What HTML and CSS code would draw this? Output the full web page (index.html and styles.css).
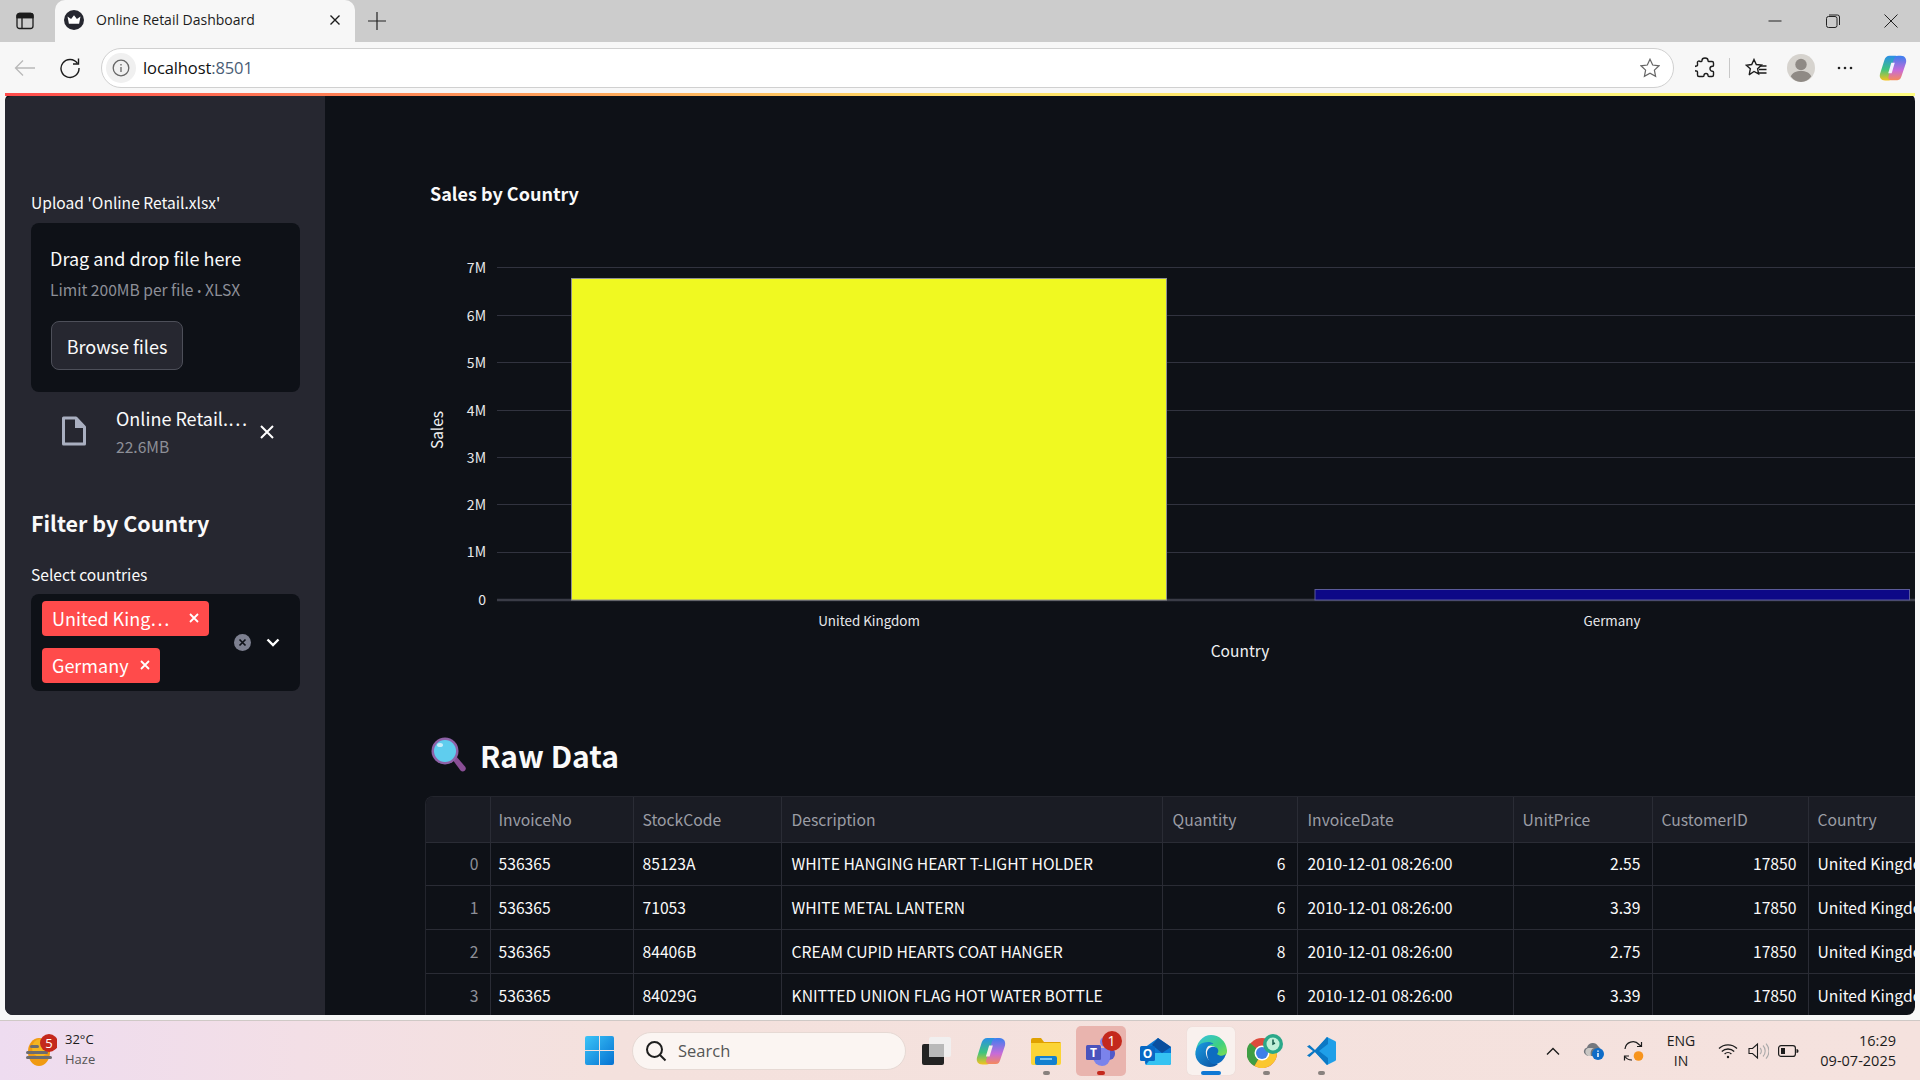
FILE: index.html
```html
<!DOCTYPE html>
<html lang="en">
<head>
<meta charset="utf-8">
<title>Online Retail Dashboard</title>
<link rel="stylesheet" href="styles.css">
</head>
<body>
<div class="screen">
  <header class="tabstrip">
    <div class="tab-side">
      <svg width="18" height="18" viewBox="0 0 18 18" fill="none" stroke="#1c1c1c" stroke-width="1.3"><rect x="1" y="1.5" width="16" height="15" rx="2.5"/><path d="M1 5.5h16M6 5.5v11"/><path d="M1 5.5V4a2.5 2.5 0 0 1 2.5-2.5h11A2.5 2.5 0 0 1 17 4v1.5z" fill="#1c1c1c"/></svg>
    </div>
    <div class="tab">
      <svg width="20" height="20" viewBox="0 0 20 20"><circle cx="10" cy="10" r="10" fill="#262730"/><path d="M3.5 6.5l3.6 2.6L10 5.2l2.9 3.9 3.6-2.6-1.4 7.2H4.9z" fill="#fff"/></svg>
      <span class="tab-title">Online Retail Dashboard</span>
      <svg class="tab-close" width="12" height="12" viewBox="0 0 12 12" stroke="#1c1c1c" stroke-width="1.4"><path d="M1.5 1.5l9 9M10.5 1.5l-9 9"/></svg>
    </div>
    <svg class="new-tab" width="18" height="18" viewBox="0 0 18 18" stroke="#222" stroke-width="1.2"><path d="M9 0v18M0 9h18"/></svg>
    <div class="win-controls">
      <svg width="14" height="14" viewBox="0 0 14 14" stroke="#222" stroke-width="1"><path d="M0.5 7h13"/></svg>
      <svg width="14" height="14" viewBox="0 0 14 14" fill="none" stroke="#222" stroke-width="1"><rect x="0.5" y="2.5" width="10.5" height="11" rx="2"/><path d="M3 1h8.500a2 2 0 0 1 2 2v8"/></svg>
      <svg width="14" height="14" viewBox="0 0 14 14" stroke="#222" stroke-width="1"><path d="M0.500 0.500l13 13M13.500 0.500l-13 13"/></svg>
    </div>
  </header>

  <nav class="toolbar">
    <svg class="tb-back" width="22" height="18" viewBox="0 0 22 18" fill="none" stroke="#b9b9b9" stroke-width="1.300"><path d="M21 9H1.500M9 1.500L1.500 9 9 16.500"/></svg>
    <svg class="tb-reload" width="22" height="22" viewBox="0 0 22 22" fill="none" stroke="#1c1c1c" stroke-width="1.400"><path d="M18.500 6.500A9 9 0 1 0 20 11"/><path d="M19.500 1.500v5.500H14"/></svg>
    <div class="address">
      <span class="info"><svg width="18" height="18" viewBox="0 0 18 18" fill="none" stroke="#666" stroke-width="1.300"><circle cx="9" cy="9" r="7.800"/><path d="M9 8v5M9 5v1.500"/></svg></span>
      <span class="url">localhost<span class="port">:8501</span></span>
      <svg class="addr-star" width="20" height="20" viewBox="0 0 20 20" fill="none" stroke="#666" stroke-width="1.200"><path d="M10 1.200l2.700 5.800 6.300.8-4.600 4.300 1.200 6.200L10 15.200l-5.600 3.100 1.200-6.200L1 7.800 7.300 7z"/></svg>
    </div>
    <div class="tb-icons">
      <svg width="20" height="22" viewBox="0 0 20 22" fill="none" stroke="#1c1c1c" stroke-width="1.400"><path d="M7 3.500a3 2.500 0 0 1 6 0c0 .6 0 1 .500 1h3.500a1.500 1.500 0 0 1 1.500 1.500v2.500c0 .5-.5.800-1 .800a2.500 2.500 0 0 0 0 5c.5 0 1 .3 1 .8V18a1.500 1.500 0 0 1-1.500 1.500h-3c-.6 0-1-.4-1-1a2 2 0 0 0-4 0c0 .6-.4 1-1 1H4a1.500 1.500 0 0 1-1.500-1.500v-3c0-.5-.4-1-1-1a2.500 2.500 0 0 1 0-5c.6 0 1-.4 1-1V6A1.500 1.500 0 0 1 5 4.500h1.500c.4 0 .5-.4.500-1z"/></svg>
      <span class="tb-divider"></span>
      <svg class="tb-favs" width="22" height="20" viewBox="0 0 22 20" fill="none" stroke="#1c1c1c" stroke-width="1.400"><path d="M9 1.500l2.300 5 5.200.6-3.900 3.600 1 5.200L9 13.500l-4.600 3-.1-.1 1-5.600L1.300 7.200l5.400-.7z"/><path d="M15 8h6.500M14 11.500h7.500M13.500 15h8"/></svg>
      <svg class="tb-avatar" width="28" height="28" viewBox="0 0 28 28"><circle cx="14" cy="14" r="14" fill="#d6d3ce"/><circle cx="14" cy="10.500" r="5.700" fill="#8f8a85"/><path d="M3.800 22.500c1.500-4 5.500-5.500 10.200-5.500s8.700 1.500 10.200 5.500A14 14 0 0 1 14 28 14 14 0 0 1 3.800 22.500z" fill="#8f8a85"/></svg>
      <svg class="tb-dots" width="16" height="4" viewBox="0 0 16 4" fill="#222"><circle cx="2" cy="2" r="1.300"/><circle cx="8" cy="2" r="1.300"/><circle cx="14" cy="2" r="1.300"/></svg>
      <svg class="tb-copilot" width="28" height="26" viewBox="0 0 32 30"><defs><linearGradient id="cpA" x1="0" y1="0" x2="0" y2="1"><stop offset="0" stop-color="#2a8fe8"/><stop offset=".55" stop-color="#3fc47e"/><stop offset="1" stop-color="#f6c21c"/></linearGradient><linearGradient id="cpB" x1="0" y1="0" x2="0" y2="1"><stop offset="0" stop-color="#3a7ff0"/><stop offset=".6" stop-color="#c86bd8"/><stop offset="1" stop-color="#f58a5c"/></linearGradient></defs><path d="M12 1h7c2 0 3 1 3.500 3L16 26c-.5 2-2 3.500-5 3.500H7C2 29.500 0 26 1 22L6 6c1-3 3-5 6-5z" fill="url(#cpA)"/><path d="M21 29h-7c-2 0-3-1-3.500-3L17 5c.6-2 2-4 5-4h3c5 0 7 4 6 8l-5 15c-1 3-2 5-5 5z" fill="url(#cpB)"/><path d="M14 9h4l-3.500 12h-4z" fill="#f4f0ff"/></svg>
    </div>
  </nav>

  <div class="app">
    <aside class="sidebar">
      <div class="field-label">Upload 'Online Retail.xlsx'</div>
      <section class="dropzone">
        <div class="drop-title">Drag and drop file here</div>
        <div class="drop-limit">Limit 200MB per file <span class="bullet">•</span> XLSX</div>
        <button class="browse">Browse files</button>
      </section>
      <div class="file-row">
        <svg class="file-icon" width="26" height="30" viewBox="0 0 26 30" fill="none" stroke="#a9afc0" stroke-width="3" stroke-linejoin="round"><path d="M2.500 2h12.500l8.500 9v17h-21z"/><path d="M14 2l9.500 10H14z" fill="#a9afc0" stroke="none"/></svg>
        <div class="file-meta">
          <div class="file-name">Online Retail.…</div>
          <div class="file-size">22.6MB</div>
        </div>
        <svg class="file-x" width="14" height="14" viewBox="0 0 14 14" stroke="#fff" stroke-width="2"><path d="M1 1l12 12M13 1L1 13"/></svg>
      </div>
      <h3 class="filter-head">Filter by Country</h3>
      <div class="field-label">Select countries</div>
      <div class="multiselect">
        <div class="tags">
          <span class="tag tag-long"><span class="tag-text">United King…</span><svg width="10" height="10" viewBox="0 0 10 10" stroke="#fff" stroke-width="1.800"><path d="M1 1l8 8M9 1L1 9"/></svg></span>
          <span class="tag"><span class="tag-text">Germany</span><svg width="10" height="10" viewBox="0 0 10 10" stroke="#fff" stroke-width="1.800"><path d="M1 1l8 8M9 1L1 9"/></svg></span>
        </div>
        <svg class="ms-clear" width="17" height="17" viewBox="0 0 17 17"><circle cx="8.500" cy="8.500" r="8.500" fill="#7d8090"/><path d="M5.500 5.500l6 6M11.500 5.500l-6 6" stroke="#0e1117" stroke-width="1.700"/></svg>
        <svg class="ms-chevron" width="14" height="9" viewBox="0 0 14 9" fill="none" stroke="#fff" stroke-width="2.400"><path d="M1.500 1.500L7 7l5.500-5.500"/></svg>
      </div>
    </aside>

    <main class="main">
      <div class="chart-title">Sales by Country</div>
      <svg class="chart" width="1495" height="470" viewBox="425 210 1495 470">
        <g class="grid">
          <path d="M497 267.500H1915M497 315.500H1915M497 362.500H1915M497 410.500H1915M497 457.500H1915M497 504.500H1915M497 552.500H1915"/>
        </g>
        <path class="axis-zero" d="M497 600H1915"/>
        <rect class="bar-uk" x="571.500" y="278.500" width="595" height="321.500"/>
        <rect class="bar-de" x="1315" y="589.500" width="594.500" height="10.500"/>
        <g class="tick" text-anchor="end">
          <text x="486" y="273">7M</text><text x="486" y="321">6M</text><text x="486" y="368">5M</text><text x="486" y="416">4M</text><text x="486" y="463">3M</text><text x="486" y="510">2M</text><text x="486" y="557">1M</text><text x="486" y="605">0</text>
        </g>
        <g class="tick tick-x" text-anchor="middle">
          <text x="869" y="626">United Kingdom</text><text x="1612" y="626">Germany</text>
        </g>
        <text class="axis-title" x="1240" y="657" text-anchor="middle">Country</text>
        <text class="axis-title" text-anchor="middle" transform="translate(443 430) rotate(-90)">Sales</text>
      </svg>
      <h2 class="raw-head">
        <svg width="36" height="36" viewBox="0 0 36 36"><path d="M21 22l4-3 9 10.500c1.200 1.500 1 3-.3 4.200s-3 1-4.200-.3z" fill="#8a4f96"/><circle cx="14" cy="14" r="13.500" fill="#8e62a8"/><circle cx="14" cy="14" r="11" fill="#5fcdee"/><ellipse cx="9" cy="8" rx="3" ry="2" fill="#c8eefa"/></svg>
        <span>Raw Data</span>
      </h2>
      <div class="table-wrap">
        <table class="data">
          <colgroup><col class="c-idx"><col class="c-inv"><col class="c-stock"><col class="c-desc"><col class="c-qty"><col class="c-date"><col class="c-price"><col class="c-cust"><col class="c-country"></colgroup>
          <thead><tr><th></th><th>InvoiceNo</th><th>StockCode</th><th>Description</th><th>Quantity</th><th>InvoiceDate</th><th>UnitPrice</th><th>CustomerID</th><th>Country</th></tr></thead>
          <tbody>
            <tr><td class="idx">0</td><td>536365</td><td>85123A</td><td>WHITE HANGING HEART T-LIGHT HOLDER</td><td class="num">6</td><td>2010-12-01 08:26:00</td><td class="num">2.55</td><td class="num">17850</td><td>United Kingdom</td></tr>
            <tr><td class="idx">1</td><td>536365</td><td>71053</td><td>WHITE METAL LANTERN</td><td class="num">6</td><td>2010-12-01 08:26:00</td><td class="num">3.39</td><td class="num">17850</td><td>United Kingdom</td></tr>
            <tr><td class="idx">2</td><td>536365</td><td>84406B</td><td>CREAM CUPID HEARTS COAT HANGER</td><td class="num">8</td><td>2010-12-01 08:26:00</td><td class="num">2.75</td><td class="num">17850</td><td>United Kingdom</td></tr>
            <tr><td class="idx">3</td><td>536365</td><td>84029G</td><td>KNITTED UNION FLAG HOT WATER BOTTLE</td><td class="num">6</td><td>2010-12-01 08:26:00</td><td class="num">3.39</td><td class="num">17850</td><td>United Kingdom</td></tr>
          </tbody>
        </table>
      </div>
    </main>
  </div>

  <footer class="taskbar">
    <div class="weather">
      <svg class="weather-icon" width="32" height="34" viewBox="0 0 32 34"><ellipse cx="14" cy="18" rx="11" ry="14" fill="#f09a12"/><ellipse cx="15" cy="14" rx="8" ry="9" fill="#f4b522"/><g fill="#6c6c70"><rect x="5" y="11" width="9" height="3" rx="1.500"/><rect x="1" y="17" width="22" height="3" rx="1.500"/><rect x="1" y="22" width="26" height="3" rx="1.500"/></g><circle cx="24" cy="9" r="9" fill="#c4281c"/><text class="badge-num" x="24" y="13.500" text-anchor="middle">5</text></svg>
      <div class="weather-text"><div class="w-temp">32°C</div><div class="w-cond">Haze</div></div>
    </div>
    <div class="tb-center">
      <svg class="win-logo" width="29" height="29" viewBox="0 0 29 29"><defs><linearGradient id="wl" x1="0" y1="0" x2="1" y2="1"><stop offset="0" stop-color="#3cc4f7"/><stop offset="1" stop-color="#0572d2"/></linearGradient></defs><path d="M0 2a2 2 0 0 1 2-2h12v14H0zM15 0h12a2 2 0 0 1 2 2v12H15zM0 15h14v14H2a2 2 0 0 1-2-2zM15 15h14v12a2 2 0 0 1-2 2H15z" fill="url(#wl)"/></svg>
      <div class="search">
        <svg width="22" height="22" viewBox="0 0 22 22" fill="none" stroke="#1e1e1e" stroke-width="2"><circle cx="9.500" cy="9.500" r="7.500"/><path d="M15 15l5.500 5.500"/></svg>
        <span>Search</span>
      </div>
      <div class="app-slot">
        <svg width="30" height="30" viewBox="0 0 30 30"><rect x="1" y="8" width="22" height="21" rx="2" fill="#232323"/><rect x="8" y="1" width="22" height="20" rx="2" fill="#f1f1f1" fill-opacity=".9"/><rect x="8" y="8" width="15" height="13" fill="#b9b9b9"/></svg>
      </div>
      <div class="app-slot">
        <svg width="30" height="28" viewBox="0 0 32 30"><defs><linearGradient id="cpC" x1="0" y1="0" x2="0" y2="1"><stop offset="0" stop-color="#2a8fe8"/><stop offset=".55" stop-color="#3fc47e"/><stop offset="1" stop-color="#f6c21c"/></linearGradient><linearGradient id="cpD" x1="0" y1="0" x2="0" y2="1"><stop offset="0" stop-color="#3a7ff0"/><stop offset=".6" stop-color="#c86bd8"/><stop offset="1" stop-color="#f58a5c"/></linearGradient></defs><path d="M12 1h7c2 0 3 1 3.500 3L16 26c-.5 2-2 3.500-5 3.500H7C2 29.500 0 26 1 22L6 6c1-3 3-5 6-5z" fill="url(#cpC)"/><path d="M21 29h-7c-2 0-3-1-3.500-3L17 5c.6-2 2-4 5-4h3c5 0 7 4 6 8l-5 15c-1 3-2 5-5 5z" fill="url(#cpD)"/><path d="M14 9h4l-3.500 12h-4z" fill="#f7ece8"/></svg>
      </div>
      <div class="app-slot running">
        <svg width="32" height="28" viewBox="0 0 32 28"><path d="M1 3a2 2 0 0 1 2-2h8l3 4h16a2 2 0 0 1 1 2v3H1z" fill="#e0a100"/><path d="M1 6h30v20a2 2 0 0 1-2 2H3a2 2 0 0 1-2-2z" fill="#fbd435"/><rect x="5" y="19" width="22" height="9" rx="2" fill="#1480cf"/><rect x="10" y="21" width="12" height="2" fill="#7cc7f2"/></svg>
      </div>
      <div class="app-slot active-teams">
        <svg width="32" height="30" viewBox="0 0 32 30"><circle cx="20" cy="6" r="5" fill="#7b83eb"/><circle cx="28" cy="9" r="3.500" fill="#5059c9"/><rect x="16" y="11" width="14" height="13" rx="6" fill="#5059c9"/><path d="M8 12h17v10a8 8 0 0 1-8 8 9 9 0 0 1-9-9z" fill="#7b83eb"/><rect x="1" y="9" width="15" height="15" rx="1.500" fill="#4b53bc"/><text class="teams-t" x="8.500" y="21" text-anchor="middle">T</text></svg>
        <b class="count-badge">1</b>
        <i class="dash-red"></i>
      </div>
      <div class="app-slot">
        <svg width="32" height="28" viewBox="0 0 32 28"><path d="M4 11L18 1l13 9v16a2 2 0 0 1-2 2H7a2 2 0 0 1-2-2z" fill="#0a78d4"/><path d="M18 1l13 9-9 6-10-8z" fill="#0b4f9e"/><path d="M6 28l9-12h16v10a2 2 0 0 1-2 2z" fill="#35c3f2"/><path d="M6 14l6 6-6 6z" fill="#0f5ea8"/><rect x="0" y="9" width="15" height="15" rx="1.500" fill="#0868c4"/><text class="teams-t" x="7.500" y="21" text-anchor="middle">O</text></svg>
      </div>
      <div class="app-slot active-edge">
        <svg width="32" height="32" viewBox="0 0 32 32"><defs><linearGradient id="eg" x1="0" y1="0" x2="1" y2="1"><stop offset="0" stop-color="#35c1e8"/><stop offset=".6" stop-color="#3fd07f"/><stop offset="1" stop-color="#86e04c"/></linearGradient><linearGradient id="eb" x1="0" y1="0" x2="1" y2="1"><stop offset="0" stop-color="#1b9de2"/><stop offset="1" stop-color="#0b4f9e"/></linearGradient></defs><path d="M16 0C24 0 31 6 32 15c.5 4-2 7-6 7-3 0-6-1-5-3 1-1 2-3 0-6-2-3-8-3-12 0-3 2-6 5-8.500 7C.5 7 8 0 16 0z" fill="url(#eg)"/><path d="M.5 20C0 10 7 7 13 7c4 0 6 2 5 2-4 0-8 4-7 10s6 10 12 10c-2 2-5 3-8 3C8 32 1 27 .5 20z" fill="url(#eb)"/><path d="M12 18c0-4 4-7 8-6s4 5 2 7c3 3 8 2 9-1-1 7-7 12-13 11-4-1-6-7-6-11z" fill="#0d6cc0"/></svg>
        <i class="dash-blue"></i>
      </div>
      <div class="app-slot running">
        <svg class="chrome" width="38" height="34" viewBox="0 0 38 34"><circle cx="15" cy="19" r="15" fill="#dd4b3d"/><path d="M15 19l-7.500 13A15 15 0 0 1 3 9z" fill="#3f9e44"/><path d="M15 19h15a15 15 0 0 1-22.500 13z" fill="#fbc730"/><circle cx="15" cy="19" r="7.500" fill="#fff"/><circle cx="15" cy="19" r="6" fill="#3f7fe8"/><circle cx="26" cy="10" r="10" fill="#2aa889"/><circle cx="26" cy="10" r="6.500" fill="#bff0d8"/><path d="M26 5.500V10l2-1" fill="none" stroke="#145a4a" stroke-width="1.500"/></svg>
      </div>
      <div class="app-slot running">
        <svg width="30" height="30" viewBox="0 0 30 30"><path d="M21 1l8 4a1.500 1.500 0 0 1 1 1.500v17a1.500 1.500 0 0 1-1 1.500l-8 4L9 16z" fill="#1f9fe8"/><path d="M21 1l1 1v6l-9 7 9 7v6l-1 1L9 16 3.500 21 1 19.500 7 15 1 10.500 3.500 9 9 14z" fill="#0b78c4"/></svg>
      </div>
    </div>
    <div class="tray">
      <svg class="tray-up" width="14" height="8" viewBox="0 0 14 8" fill="none" stroke="#1c1c1c" stroke-width="1.400"><path d="M1 7.500L7 1.500l6 6"/></svg>
      <svg class="tray-cloud" width="22" height="20" viewBox="0 0 22 20"><path d="M3 14a4 4 0 0 1 1-7.500A6 6 0 0 1 15 5a4 4 0 0 1 2 4l-5 6H5z" fill="#75787e"/><path d="M3 13a4 4 0 0 1 2-6h6c-3 1-4 4-3 8H5z" fill="#c9c7c4"/><circle cx="15" cy="13" r="6" fill="#0f6cc7"/><path d="M15 12v4M15 9.500v1.200" stroke="#fff" stroke-width="1.500"/></svg>
      <svg class="tray-sync" width="22" height="22" viewBox="0 0 22 22" fill="none" stroke="#1c1c1c" stroke-width="1.200"><path d="M2 9a8 8 0 0 1 14-4.500l2.500 2M18.500 2v4.500H14"/><path d="M1.500 20.500V16H6"/><path d="M2 16.500a8 8 0 0 0 7 3.500"/><circle cx="15.500" cy="16" r="4.800" fill="#f7941d" stroke="none"/></svg>
      <div class="lang"><div>ENG</div><div>IN</div></div>
      <svg class="tray-wifi" width="20" height="16" viewBox="0 0 20 16" fill="none" stroke="#1c1c1c" stroke-width="1.300"><path d="M1 5.500a13 13 0 0 1 18 0M3.800 8.500a9 9 0 0 1 12.400 0M6.600 11a5 5 0 0 1 6.800 0"/><circle cx="10" cy="14" r="1.200" fill="#1c1c1c" stroke="none"/></svg>
      <svg class="tray-vol" width="21" height="18" viewBox="0 0 21 18" fill="none" stroke="#1c1c1c" stroke-width="1.100"><path d="M1 6.500h3.500L9.500 2v14l-5-4.500H1z"/><path d="M12 6a4 4 0 0 1 0 6M15 3.500a8 8 0 0 1 0 11M18 1.500a11 11 0 0 1 0 15" stroke="#aaa"/></svg>
      <svg class="tray-bat" width="21" height="12" viewBox="0 0 21 12" fill="none" stroke="#1c1c1c" stroke-width="1.200"><rect x="0.600" y="0.600" width="16.800" height="10.800" rx="2.500"/><rect x="3" y="3" width="4" height="6" fill="#1c1c1c" stroke="none"/><path d="M18.500 4v4c1.500 0 2-1 2-2s-.5-2-2-2z" fill="#1c1c1c" stroke="none"/></svg>
      <div class="clock"><div>16:29</div><div>09-07-2025</div></div>
    </div>
  </footer>
</div>
</body>
</html>
```

FILE: styles.css
```css
* { box-sizing: border-box; }
html, body { margin: 0; padding: 0; height: 100%; overflow: hidden; }
body { font-family: "Noto Sans CJK SC", "Noto Sans", sans-serif; background: #f7f7f7; color: #fafafa; }
svg { display: block; flex: none; }
.screen { display: flex; flex-direction: column; width: 1920px; height: 1080px; overflow: hidden; }

/* Browser tab strip */
.tabstrip { height: 42px; flex: none; background: #cccccc; display: flex; align-items: center; }
.tab-side { width: 55px; display: flex; justify-content: center; padding-right: 6px; }
.tab { width: 300px; height: 42px; background: #f7f7f7; border-radius: 10px 10px 0 0; display: flex; align-items: center; padding: 0 14px 2px 9px; gap: 12px; font-family: "Open Sans", sans-serif; }
.tab-title { flex: 1; font-size: 14px; color: #1c1c1c; margin-bottom: 2px; }
.new-tab { margin-left: 13px; }
.win-controls { margin-left: auto; display: flex; gap: 44px; padding-right: 22px; align-items: center; }

/* Browser toolbar */
.toolbar { height: 51px; flex: none; background: #f7f7f7; display: flex; align-items: center; padding: 0 13px 0 14px; }
.tb-back { margin-right: 23px; }
.tb-reload { margin-right: 20px; }
.address { width: 1573px; height: 40px; background: #fff; border: 1px solid #d0d0d0; border-radius: 20px; display: flex; align-items: center; padding: 0 13px 0 4px; font-family: "Open Sans", sans-serif; }
.info { width: 30px; height: 30px; border-radius: 50%; background: #f0f0f0; display: flex; align-items: center; justify-content: center; }
.url { margin-left: 7px; font-size: 16.500px; color: #111; flex: 1; letter-spacing: -0.1px; }
.port { color: #4a5d75; }
.tb-icons { display: flex; align-items: center; margin-left: 21px; }
.tb-divider { width: 1px; height: 20px; background: #c8c8c8; margin: 0 15px 0 14px; }
.tb-favs { margin-right: 20px; }
.tb-avatar { margin-right: 22px; }
.tb-dots { margin-right: 26px; }

/* Streamlit app */
.app { flex: none; height: 922px; margin: 0 5px; display: flex; border-top: 3px solid transparent; border-image: linear-gradient(90deg, #ff4b4b, #ffe066, #fffd80) 1; background: #0e1117; overflow: hidden; border-radius: 8px; position: relative; }
.sidebar { width: 320px; flex: none; background: #262730; padding: 95px 25px 0 26px; }
.field-label { font-size: 15.600px; line-height: 22px; color: #fafafa; height: 22px; }
.dropzone { margin-top: 10px; height: 169px; background: #0e1117; border-radius: 8px; padding: 22px 20px 0 19px; }
.drop-title { font-size: 18px; line-height: 26px; color: #fafafa; }
.drop-limit { font-size: 15.600px; line-height: 22px; margin-top: 7px; color: #8d8f97; white-space: nowrap; }
.bullet { font-family: "Open Sans", sans-serif; font-size: 12px; }
.browse { display: block; margin: 18px 0 0 1px; width: 132px; height: 49px; background: #262730; border: 1px solid #4d4f59; border-radius: 8px; color: #fafafa; font: 18px "Noto Sans CJK SC", sans-serif; padding: 0; }
.file-row { display: flex; align-items: flex-start; margin-top: 13px; padding-left: 30px; height: 60px; position: relative; }
.file-icon { margin-top: 11px; }
.file-meta { margin-left: 29px; width: 134px; }
.file-name { font-size: 18px; line-height: 26px; white-space: nowrap; }
.file-size { font-size: 15.600px; line-height: 22px; margin-top: 4px; color: #8d8f97; }
.file-x { margin-left: 10px; margin-top: 20px; }
.filter-head { margin: 41px 0 0; font-size: 21.500px; font-weight: 600; line-height: 34px; color: #fafafa; }
.filter-head + .field-label { margin-top: 23px; }
.multiselect { margin-top: 9px; height: 97px; background: #0e1117; border-radius: 8px; display: flex; align-items: center; padding: 0 20px 0 11px; }
.tags { width: 195px; display: flex; flex-direction: column; gap: 12px; align-items: flex-start; padding-bottom: 2px; }
.tag { height: 35px; background: #ff4b4b; border-radius: 4px; display: flex; align-items: center; padding: 0 10px; gap: 11px; font-size: 18px; color: #fff; }
.tag-text { white-space: nowrap; }
.tag-long { width: 167px; justify-content: space-between; }
.ms-clear { margin-left: 11px; }
.ms-chevron { margin-left: 15px; }

/* Main column */
.main { flex: 1; min-width: 0; overflow: hidden; padding: 83px 0 0 100px; }
.chart-title { font-size: 18px; font-weight: 700; line-height: 28px; color: #fafafa; margin-left: 5px; }
.chart { margin-top: 3px; }
.grid path { stroke: #31333f; stroke-width: 1; fill: none; }
.axis-zero { stroke: #3a3c47; stroke-width: 2.500; fill: none; }
.bar-uk { fill: #f0f921; stroke: #8f9090; stroke-width: 1; }
.bar-de { fill: #0d0887; stroke: #5a5a9a; stroke-width: 1; }
.tick text { font-size: 14px; fill: #e8e9ec; }
.tick-x text { font-size: 13.400px; }
.axis-title { font-size: 15.500px; fill: #f0f1f3; }
.raw-head { display: flex; align-items: center; margin: 53px 0 0 6px; height: 44px; gap: 13px; font-size: 30px; font-weight: 600; color: #fafafa; }
.table-wrap { margin-top: 19px; width: 1500px; border: 1px solid #23252d; border-right: 0; border-bottom: 0; border-radius: 8px 0 0 0; overflow: hidden; }
.data { width: 1500px; table-layout: fixed; border-collapse: collapse; font-size: 15.700px; color: #fafafa; }
.c-idx { width: 64px; }
.c-inv { width: 143px; }
.c-stock { width: 148px; }
.c-desc { width: 381px; }
.c-qty { width: 135px; }
.c-date { width: 216px; }
.c-price { width: 139px; }
.c-cust { width: 156px; }
.c-country { width: 118px; }
.data th { height: 45px; background: #1a1c24; color: #9b9da5; font-weight: 400; text-align: left; padding: 0 9px; border: 1px solid #2a2c35; border-top: 0; border-left-width: 0; white-space: nowrap; overflow: hidden; }
.data td { height: 43.750px; padding: 0 9px; border: 1px solid #2a2c35; border-left-width: 0; white-space: nowrap; overflow: hidden; }
.data th:nth-child(2), .data td:nth-child(2) { padding-left: 8px; }
.data th:nth-child(4), .data td:nth-child(4), .data th:nth-child(5), .data th:nth-child(6), .data td:nth-child(6) { padding-left: 10px; }
.data td.idx { text-align: right; color: #8d8f97; padding-right: 11px; }
.data td.num { text-align: right; padding-right: 11px; }

/* Windows taskbar */
.taskbar { margin-top: auto; height: 60px; flex: none; border-top: 1px solid #cfc9c6; background: linear-gradient(90deg, #eedcf0 0, #f3dfe6 300px, #f4e1dd 600px, #f5e2de 100%); display: flex; align-items: center; position: relative; font-family: "Open Sans", sans-serif; color: #1c1c1c; }
.weather { display: flex; align-items: center; width: 585px; flex: none; padding-left: 25px; }
.badge-num { font-size: 13px; fill: #fff; font-family: "Open Sans", sans-serif; }
.weather-text { margin-left: 8px; font-size: 13px; line-height: 20px; padding-bottom: 4px; }
.w-cond { color: #555; }
.tb-center { display: flex; align-items: center; width: 763px; flex: none; }
.search { width: 274px; flex: none; height: 38px; margin-left: 18px; margin-right: 2px; background: #fbf5f2; border: 1px solid #e6d9d4; border-radius: 19px; display: flex; align-items: center; gap: 11px; padding-left: 12px; font-size: 16.500px; color: #555; }
.app-slot { width: 55px; height: 50px; display: flex; align-items: center; justify-content: center; position: relative; flex: none; }
.running::after { content: ""; position: absolute; left: 50%; bottom: 1px; width: 7px; height: 4px; margin-left: -3px; border-radius: 2px; background: #88817e; }
.active-teams { width: 50px; margin: 0 2.500px; background: #e9b4ae; border-radius: 5px; }
.active-edge { width: 48px; margin: 0 3.500px; height: 48px; background: #f9f1ee; border-radius: 5px; box-shadow: 0 0 1px #d8cdc8; }
.count-badge { position: absolute; left: 26px; top: 5px; width: 20px; height: 20px; border-radius: 50%; background: #c4281c; color: #fff; font-size: 14px; font-weight: 400; text-align: center; line-height: 20px; }
.dash-red { position: absolute; left: 21px; bottom: 1px; width: 8px; height: 4px; border-radius: 2px; background: #c4281c; }
.dash-blue { position: absolute; left: 14px; bottom: 0; width: 20px; height: 4px; border-radius: 2px; background: #0f78d4; }
.teams-t { font-size: 12px; font-weight: 700; fill: #fff; font-family: "Open Sans", sans-serif; }
.tray { flex: 1; display: flex; align-items: center; padding-left: 198px; }
.tray-cloud { margin-left: 23px; }
.tray-sync { margin-left: 18px; }
.lang { width: 60px; margin-left: 6px; text-align: center; font-size: 14px; line-height: 20px; }
.tray-wifi { margin-left: 7px; }
.tray-vol { margin-left: 10px; }
.tray-bat { margin-left: 9px; }
.clock { width: 97px; text-align: right; font-size: 14.500px; line-height: 20px; }
```
